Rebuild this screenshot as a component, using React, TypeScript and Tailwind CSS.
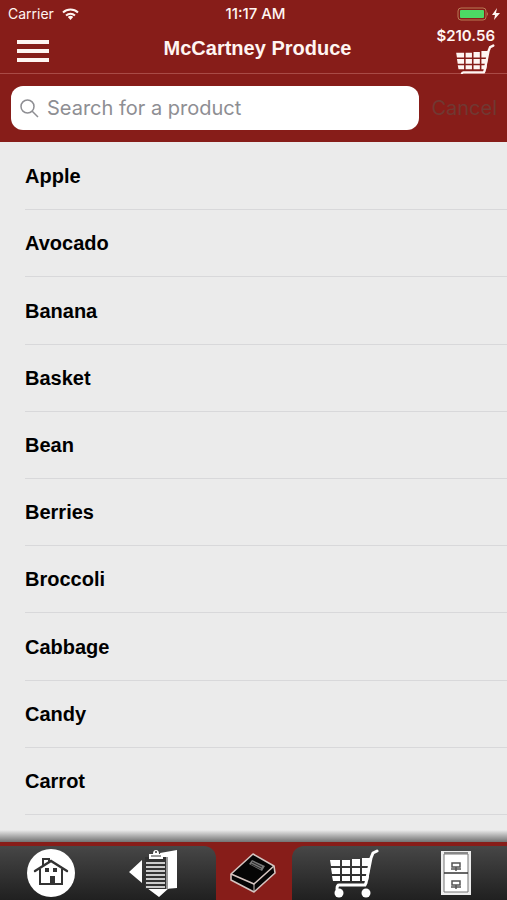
import type { ReactNode } from 'react';

const products = [
  'Apple',
  'Avocado',
  'Banana',
  'Basket',
  'Bean',
  'Berries',
  'Broccoli',
  'Cabbage',
  'Candy',
  'Carrot',
];

function CartIcon({ className, wheels = true }: { className: string; wheels?: boolean }) {
  return (
    <svg className={className} viewBox={wheels ? '0 0 49 49' : '0 0 49 38'} fill="currentColor" aria-hidden="true">
      <path d="M0 11h10v6H1zM12 11h8v6h-8zM22 10h8v7h-8zM32 9h9l-1 8h-8zM1 19h9v6H2zM12 19h8v6h-8zM22 19h8v6h-8zM32 19h8l-1 6h-7zM2 27h8v5H3zM12 27h8v5h-8zM22 27h8v5h-8zM32 27h7l-1 5h-6z" />
      <path d="M47 2l-4 2-2 5-5 25-1 2H9q-2 0-2 4" fill="none" stroke="currentColor" strokeWidth="3" strokeLinecap="round" />
      {wheels && (
        <>
          <circle cx="9" cy="44" r="4.5" />
          <circle cx="36" cy="44" r="4.5" />
        </>
      )}
    </svg>
  );
}

function HomeIcon() {
  return (
    <svg className="h-12 w-12" viewBox="0 0 48 48" aria-hidden="true">
      <circle cx="24" cy="24" r="24" fill="#fff" />
      <g fill="none" stroke="#333" strokeWidth="2">
        <path d="M8 22l16-10 16 10" strokeWidth="2.4" strokeLinecap="round" />
        <path d="M13 20v15h22V20M16 17v-7h6v3" />
      </g>
      <path d="M18 19h4v4h-4zM26 19h4v4h-4zM23 27h5v8h-5z" fill="#333" />
    </svg>
  );
}

function ClipboardIcon() {
  return (
    <svg className="h-12 w-12" viewBox="0 0 48 48" aria-hidden="true">
      <path d="M0 23l13-12v23zM18 39h22l-10 9z" fill="#fff" />
      <path d="M31 4l17-3v38l-12 1z" fill="#fff" />
      <path d="M16 8h23v32H16z" fill="#333" />
      <path d="M34 6h4v34" fill="none" stroke="#fff" />
      <path d="M20 5h4a3 4 0 0 1 6 0h4v5H20z" fill="#fff" />
      <circle cx="27" cy="3" r="1" fill="#333" />
      <path d="M22 7h10" stroke="#333" />
      <path
        d="M17 14h19M17 18h19M17 22h19M17 26h19M17 30h19M17 34h19M17 38h19"
        stroke="#fff"
        strokeWidth="1.6"
      />
    </svg>
  );
}

function BookIcon() {
  return (
    <svg className="h-10 w-12" viewBox="0 0 48 40" strokeLinejoin="round" aria-hidden="true">
      <path d="M23 1l21 12 1 7-21 19L1 27v-6z" fill="#050505" stroke="#d5c4c0" strokeWidth="1.6" />
      <path d="M1 21l23 10 20-18" fill="none" stroke="#d5c4c0" strokeWidth="1.6" />
      <path d="M24 31v7" fill="none" stroke="#d5c4c0" />
      <path d="M22 7l13 6-3 5-13-7z" fill="#777" />
      <path d="M22 9l10 5M21 11l10 5" stroke="#222" />
    </svg>
  );
}

function CabinetIcon() {
  return (
    <svg className="h-11 w-[30px]" viewBox="0 0 30 44" aria-hidden="true">
      <path d="M0 0h30v44H0z" fill="#eee" />
      <path d="M3 3h24v38H3z" fill="#fff" stroke="#777" />
      <path d="M3 1h24v2H3z" fill="#888" />
      <path d="M3 22h24" stroke="#333" strokeWidth="1.5" />
      <g fill="none" stroke="#555" strokeWidth="1.5">
        <path d="M11 12h8v4h-8zM10 18h10M15 16v4" />
        <path d="M11 30h8v4h-8zM10 36h10M15 34v4" />
      </g>
    </svg>
  );
}

function TabButton({ label, children }: { label: string; children: ReactNode }) {
  return (
    <button type="button" aria-label={label} className="flex flex-1 items-center justify-center text-white">
      {children}
    </button>
  );
}

export default function App() {
  return (
    <div className="flex min-h-screen flex-col bg-[#ebebeb] font-[Inter,sans-serif]">
      <header className="bg-[#871d19] text-[#fff5f2]">
        <div className="grid h-7 grid-cols-3 items-center pr-1 pl-2 text-sm">
          <div className="flex items-center gap-2">
            <span>Carrier</span>
            <svg className="h-3 w-[17px]" viewBox="0 0 17 12" fill="none" stroke="currentColor" strokeWidth="2" aria-hidden="true">
              <path d="M1 4.5a11 11 0 0 1 15 0M4 7.5a7 7 0 0 1 9 0" />
              <path d="M5.8 9a4 4 0 0 1 5.4 0L8.5 12z" fill="currentColor" stroke="none" />
            </svg>
          </div>
          <span className="text-center text-[15px] font-medium">11:17 AM</span>
          <div className="flex items-center justify-end">
            <svg className="h-[14px] w-[46px]" viewBox="0 0 46 14" aria-hidden="true">
              <rect x="1" y="1" width="28" height="12" rx="3" fill="none" stroke="#b97a55" />
              <rect x="3" y="3" width="24" height="8" rx="1" fill="#4cd964" />
              <path d="M30 5q2 2 0 4z" fill="#b97a55" />
              <path d="M40 1l-5 7h3l-1 5 6-7h-4z" fill="currentColor" />
            </svg>
          </div>
        </div>
        <div className="grid h-[46px] grid-cols-[80px_1fr_80px] border-b border-[#a94b46]">
          <button type="button" aria-label="Menu" className="ml-[17px] flex w-8 flex-col justify-center gap-[5px]">
            <span className="h-1 bg-current" />
            <span className="h-1 bg-current" />
            <span className="h-1 bg-current" />
          </button>
          <h1 className="pt-1 pl-2 text-center font-['Liberation_Sans',Arial,sans-serif] text-xl leading-8 font-bold">
            McCartney Produce
          </h1>
          <button type="button" aria-label="Cart, $210.56" className="mr-3 flex flex-col items-end">
            <span className="text-[15px] leading-4 font-semibold">$210.56</span>
            <CartIcon className="h-[30px] w-[39px]" wheels={false} />
          </button>
        </div>
        <div className="flex h-[68px] items-center gap-3 pr-[10px] pl-[11px]">
          <label className="flex h-11 min-w-0 flex-1 items-center gap-2 rounded-xl bg-white px-[9px]">
            <svg className="h-[19px] w-[19px] shrink-0" viewBox="0 0 19 19" fill="none" stroke="#8e8e93" strokeWidth="1.5" aria-hidden="true">
              <circle cx="7.5" cy="7.5" r="6.5" />
              <path d="M12 12l6 6" />
            </svg>
            <input
              type="text"
              aria-label="Search for a product"
              placeholder="Search for a product"
              className="min-w-0 flex-1 text-xl text-black outline-none placeholder:text-[#8e8e93]"
            />
          </label>
          <button type="button" className="text-xl text-[#713832]">
            Cancel
          </button>
        </div>
      </header>

      <main className="flex flex-1 flex-col pt-px pb-[15px]">
        <ul className="flex flex-1 flex-col pl-[25px] font-['Liberation_Sans',Arial,sans-serif] text-xl font-bold text-black">
          {products.map((name) => (
            <li key={name} className="flex min-h-16 flex-1 items-center border-b border-[#d8d8da]">
              {name}
            </li>
          ))}
        </ul>
      </main>

      <div className="h-3 bg-linear-to-b from-[#ebebeb] to-[#737373]" />
      <nav className="flex h-[58px] bg-[#871d19] pt-1">
        <div className="flex flex-1 rounded-tr-xl bg-linear-to-b from-[#474747] to-[#202020] pr-3">
          <TabButton label="Home">
            <HomeIcon />
          </TabButton>
          <TabButton label="Order guide">
            <ClipboardIcon />
          </TabButton>
        </div>
        <button type="button" aria-label="Catalog" aria-current="page" className="flex w-19 items-center justify-center">
          <BookIcon />
        </button>
        <div className="flex flex-1 rounded-tl-xl bg-linear-to-b from-[#474747] to-[#202020] pl-3">
          <TabButton label="Cart">
            <CartIcon className="h-[49px] w-[49px]" />
          </TabButton>
          <TabButton label="Orders">
            <CabinetIcon />
          </TabButton>
        </div>
      </nav>
    </div>
  );
}
